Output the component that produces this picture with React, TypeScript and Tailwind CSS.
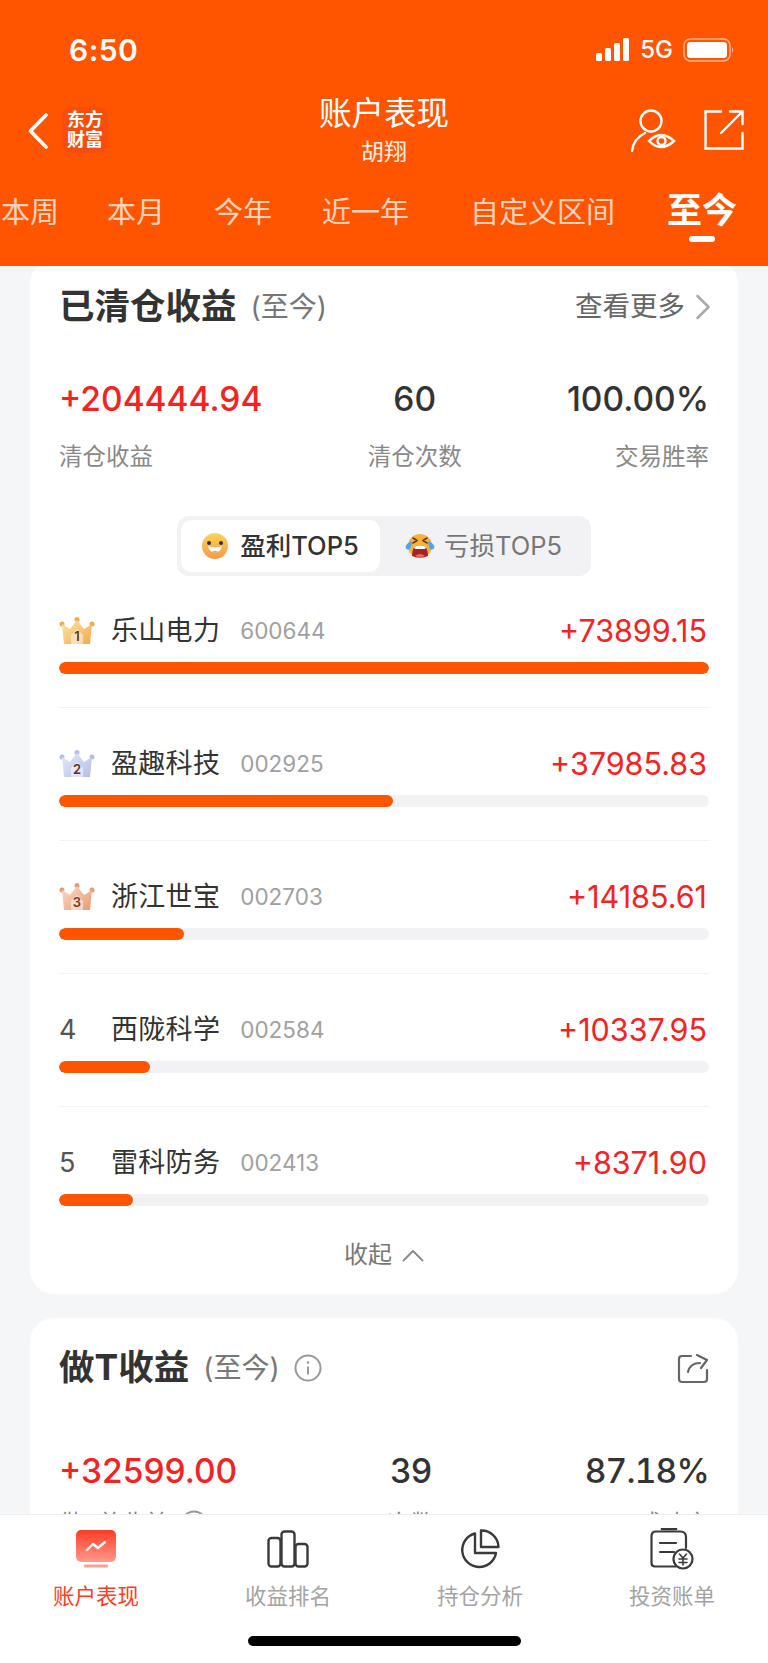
import React from 'react';
import { ChevronRight } from 'lucide-react';

const tabs = [
  { label: '本周', cls: 'ml-px' },
  { label: '本月', cls: 'ml-[48px]' },
  { label: '今年', cls: 'ml-[49px]' },
  { label: '近一年', cls: 'ml-[50px]' },
  { label: '自定义区间', cls: 'ml-[61px]' },
];

const stocks = [
  { rank: 1, name: '乐山电力', code: '600644', value: 73899.15 },
  { rank: 2, name: '盈趣科技', code: '002925', value: 37985.83 },
  { rank: 3, name: '浙江世宝', code: '002703', value: 14185.61 },
  { rank: 4, name: '西陇科学', code: '002584', value: 10337.95 },
  { rank: 5, name: '雷科防务', code: '002413', value: 8371.9 },
];

const crownColors: Record<number, { id: string; from: string; to: string; num: string }> = {
  1: { id: 'crownGold', from: '#fde6a8', to: '#f2a94a', num: '#5c3a12' },
  2: { id: 'crownSilver', from: '#e6eaf8', to: '#b4bde6', num: '#6b2a1a' },
  3: { id: 'crownBronze', from: '#fbdcc8', to: '#e99a73', num: '#7a3a22' },
};

function Crown({ rank }: { rank: number }) {
  const c = crownColors[rank];
  return (
    <svg width="36" height="28" viewBox="0 0 36 28" className="shrink-0">
      <defs>
        <linearGradient id={c.id} x1="0" y1="0" x2="1" y2="1">
          <stop offset="0" stopColor={c.from} />
          <stop offset="1" stopColor={c.to} />
        </linearGradient>
      </defs>
      <circle cx="3" cy="7" r="2.5" fill={c.to} />
      <circle cx="18" cy="2.5" r="2.5" fill={c.to} />
      <circle cx="33" cy="7" r="2.5" fill={c.to} />
      <path d="M3 7 L11 12 L18 3 L25 12 L33 7 L31 27 L5 27 Z" fill={`url(#${c.id})`} />
      <path d="M18 12 L24 18 L24 27 L12 27 L12 18 Z" fill="#ffffff" opacity="0.5" />
      <text x="18" y="24" textAnchor="middle" fontSize="13" fontWeight="600" fill={c.num} fontFamily="Inter, sans-serif">
        {rank}
      </text>
    </svg>
  );
}

function SmileFace() {
  return (
    <svg width="26" height="26" viewBox="0 0 26 26" className="shrink-0">
      <defs>
        <linearGradient id="smile" x1="0" y1="0" x2="0" y2="1">
          <stop offset="0" stopColor="#fdd455" />
          <stop offset="1" stopColor="#f39a4a" />
        </linearGradient>
      </defs>
      <circle cx="13" cy="13" r="13" fill="url(#smile)" />
      <circle cx="7" cy="10" r="2" fill="#3c2a3a" />
      <circle cx="19" cy="10" r="2" fill="#3c2a3a" />
      <path d="M6 13 Q13 15.5 20 13 Q18.5 19.5 13 19.5 Q7.5 19.5 6 13 Z" fill="#fff" />
      <path d="M10 18.6 Q13 17.4 16 18.6 Q14.5 19.5 13 19.5 Q11.5 19.5 10 18.6 Z" fill="#f4897b" />
    </svg>
  );
}

function CryFace() {
  return (
    <svg width="30" height="26" viewBox="0 0 30 26" className="shrink-0">
      <circle cx="15" cy="13" r="12" fill="#f7b23c" />
      <path d="M8 5 L12 7.5 L8 10 M22 5 L18 7.5 L22 10" fill="none" stroke="#6b3a1e" strokeWidth="1.6" strokeLinecap="round" strokeLinejoin="round" />
      <path d="M7 23 Q7 12 15 12 Q23 12 23 23 Q15 26 7 23 Z" fill="#a8202a" />
      <path d="M9 14 Q15 10.5 21 14 L20 16 L10 16 Z" fill="#fff" />
      <path d="M10 23 Q15 19 20 23 Q15 25 10 23 Z" fill="#ef6a5e" />
      <path d="M6 8 Q1 11 0.5 14 Q1 17 5 16.5 L7 10 Z" fill="#4aa8e8" />
      <path d="M24 8 Q29 11 29.5 14 Q29 17 25 16.5 L23 10 Z" fill="#4aa8e8" />
    </svg>
  );
}

function InfoIcon() {
  return (
    <svg width="28" height="28" viewBox="0 0 28 28" fill="none" stroke="#999" className="shrink-0">
      <circle cx="14" cy="14" r="12.5" strokeWidth="2" />
      <circle cx="14" cy="8.5" r="1.3" fill="#999" stroke="none" />
      <path d="M14 12.5 V20.5" strokeWidth="2" />
    </svg>
  );
}

function StockRow({ item, max, last }: { item: (typeof stocks)[number]; max: number; last: boolean }) {
  return (
    <div className={last ? 'pt-[15px]' : 'pt-[15px] pb-[33px] border-b border-[#f1f2f4] mb-[23px]'}>
      <div className="flex items-center h-[36px]">
        <div className="w-[52px] shrink-0">
          {item.rank <= 3 ? <Crown rank={item.rank} /> : <span className="text-[27px] text-[#555] leading-none">{item.rank}</span>}
        </div>
        <span className="text-[27px] text-[#333] tracking-[0.3px]">{item.name}</span>
        <span className="ml-5 text-[22.5px] text-[#a0a0a0]">{item.code}</span>
        <span className="ml-auto mr-0.5 text-[30.5px] text-[#f42323]">+{item.value.toFixed(2)}</span>
      </div>
      <div className="mt-[13px] h-3 rounded-full bg-[#f2f2f5] overflow-hidden">
        <div className="h-full rounded-full bg-[#ff5500]" style={{ width: `${(item.value / max) * 100}%` }} />
      </div>
    </div>
  );
}

type StatsProps = {
  profit: string;
  count: string;
  rate: string;
  labels: string[];
  labelGap: string;
  rateCls?: string;
  info?: boolean;
};

function Stats({ profit, count, rate, labels, labelGap, rateCls, info }: StatsProps) {
  return (
    <div className="flex justify-between">
      <div>
        <div className="text-[33.5px] leading-[44px] font-medium text-[#f42323]">{profit}</div>
        <div className={`${labelGap} flex items-center gap-3 text-[23.5px] leading-[32px] text-[#888]`}>
          {labels[0]}
          {info && <InfoIcon />}
        </div>
      </div>
      <div className="text-center">
        <div className="text-[33.5px] leading-[44px] font-medium text-[#333]">{count}</div>
        <div className={`${labelGap} text-[23.5px] leading-[32px] text-[#888]`}>{labels[1]}</div>
      </div>
      <div className="text-right">
        <div className={`text-[33.5px] leading-[44px] font-medium text-[#333] ${rateCls ?? ''}`}>{rate}</div>
        <div className={`${labelGap} text-[23.5px] leading-[32px] text-[#888]`}>{labels[2]}</div>
      </div>
    </div>
  );
}

function NavItem({ label, active, children }: { label: string; active?: boolean; children: React.ReactNode }) {
  return (
    <div className="flex flex-col items-center">
      <div className="h-[44px] flex items-center justify-center">{children}</div>
      <span className={`mt-[11px] text-[21.5px] leading-[28px] ${active ? 'text-[#ff3b24]' : 'text-[#a3a3a3]'}`}>{label}</span>
    </div>
  );
}

export default function App() {
  const max = Math.max(...stocks.map((s) => s.value));

  return (
    <div className="h-[1663px] w-[768px] overflow-hidden flex flex-col bg-[#f5f6f8] font-['Inter','Noto_Sans_CJK_SC',sans-serif]">
      {/* header */}
      <header className="h-[266px] shrink-0 bg-[#ff5500] text-white flex flex-col relative z-10">
        <div className="h-[100px] shrink-0 flex items-center justify-between pl-[69px] pr-[33px]">
          <span className="text-[30px] font-semibold tracking-[0.5px]">6:50</span>
          <div className="flex items-center">
            <svg width="34" height="24" viewBox="0 0 34 24" fill="#fff">
              <rect x="0" y="15" width="6" height="8" rx="1.5" />
              <rect x="9" y="10" width="6" height="13" rx="1.5" />
              <rect x="18" y="5" width="6" height="18" rx="1.5" />
              <rect x="27" y="0" width="6" height="23" rx="1.5" />
            </svg>
            <span className="ml-[10px] text-[24px] font-medium">5G</span>
            <svg width="52" height="24" viewBox="0 0 52 24" className="ml-[10px]">
              <rect x="1" y="1" width="46" height="22" rx="6.5" fill="none" stroke="#ffffff" strokeOpacity="0.55" strokeWidth="1.5" />
              <rect x="4" y="4" width="40" height="16" rx="3.5" fill="#fff" />
              <path d="M49 9 Q51.5 12 49 15 Z" fill="#ffffff" fillOpacity="0.55" />
            </svg>
          </div>
        </div>
        <div className="h-[72px] shrink-0 flex items-start relative">
          <div className="flex-1 flex items-start pl-[28px] pt-[7px]">
            <svg width="20" height="36" viewBox="0 0 20 36" fill="none" stroke="#fff" strokeWidth="3.6" strokeLinecap="round" strokeLinejoin="round" className="mt-[6px]">
              <path d="M18 2 L2.5 18 L18 34" />
            </svg>
            <div className="ml-[14px] w-[46px] h-[46px] rounded-[9px] bg-[#f74e10] flex items-center justify-center text-[18px] leading-[20px] font-bold text-center">
              东方<br />财富
            </div>
          </div>
          <div className="flex flex-col items-center mr-1">
            <span className="text-[32.5px] leading-[33px] mt-[-3px]">账户表现</span>
            <span className="text-[23px] leading-[28px] mt-[8px] text-white/90">胡翔</span>
          </div>
          <div className="flex-1 flex justify-end items-start gap-7 pr-6 pt-[9px]">
            <svg width="46" height="44" viewBox="0 0 46 44" fill="none" stroke="#fff" strokeWidth="2.4" strokeLinecap="round">
              <circle cx="21" cy="12" r="10.5" />
              <path d="M2 42 C3 33 9 27 15 24" />
              <path d="M19 32 Q31 20 44 32 Q31 44 19 32 Z" />
              <circle cx="31.5" cy="32" r="4" />
            </svg>
            <svg width="40" height="40" viewBox="0 0 40 40" fill="none" stroke="#fff" strokeWidth="2.4" strokeLinecap="round" className="mt-px">
              <path d="M17 1.5 H1.5 V38.5 H38.5 V23" />
              <path d="M17 23 L38 2 M26 1.5 H38.5 V14" />
            </svg>
          </div>
        </div>
        <div className="flex items-start text-[29px] leading-[34px] text-white/75 pt-[24px]">
          {tabs.map((t) => (
            <span key={t.label} className={`${t.cls} whitespace-nowrap`}>{t.label}</span>
          ))}
          <div className="ml-[52px] flex flex-col items-center mt-[-6px]">
            <span className="text-[35px] leading-[40px] font-bold text-white">至今</span>
            <span className="mt-[6px] w-[26px] h-[6px] rounded-full bg-white" />
          </div>
        </div>
      </header>

      {/* content */}
      <main className="flex-1 min-h-0 overflow-hidden px-[30px] -mt-[6px]">
        <section className="bg-white rounded-[24px] px-[29px] pt-[25px] pb-[21px]">
          <div className="flex items-center justify-between h-[44px]">
            <div className="flex items-center">
              <h2 className="text-[35.5px] font-bold text-[#333]">已清仓收益</h2>
              <span className="ml-[14px] text-[28px] text-[#777]">(至今)</span>
            </div>
            <div className="flex items-center text-[27.5px] text-[#666]">
              查看更多
              <ChevronRight size={44} strokeWidth={1.4} className="text-[#aaa] -ml-[4px] -my-2 -mr-[16px]" />
            </div>
          </div>
          <div className="mt-[48px]">
            <Stats profit="+204444.94" count="60" rate="100.00%" labels={['清仓收益', '清仓次数', '交易胜率']} labelGap="mt-5" />
          </div>
          <div className="mt-[43px] flex justify-center">
            <div className="flex w-[414px] h-[60px] p-1 rounded-[12px] bg-[#f2f2f5] text-[25.5px]">
              <div className="w-[199px] bg-white rounded-[11px] flex items-center justify-center gap-3 font-medium text-[#333]">
                <SmileFace />
                盈利TOP5
              </div>
              <div className="flex-1 flex items-center justify-center gap-[9px] text-[#777]">
                <CryFace />
                亏损TOP5
              </div>
            </div>
          </div>
          <div className="mt-[22px]">
            {stocks.map((s, i) => (
              <StockRow key={s.code} item={s} max={max} last={i === stocks.length - 1} />
            ))}
          </div>
          <div className="mt-[31px] flex items-center justify-center text-[24px] leading-[36px] text-[#777]">
            收起
            <svg width="22" height="13" viewBox="0 0 22 13" fill="none" stroke="#888" strokeWidth="1.8" strokeLinecap="round" strokeLinejoin="round" className="ml-[10px]">
              <path d="M1.5 11.5 L11 2 L20.5 11.5" />
            </svg>
          </div>
        </section>

        <section className="mt-6 bg-white rounded-[24px] px-[29px] pt-[28px]">
          <div className="flex items-center justify-between h-[44px]">
            <div className="flex items-center">
              <h2 className="text-[35.5px] font-bold text-[#333]">做T收益</h2>
              <span className="ml-[14px] text-[28px] text-[#777]">(至今)</span>
              <span className="ml-[14px]"><InfoIcon /></span>
            </div>
            <svg width="32" height="32" viewBox="0 0 32 32" fill="none" stroke="#666" strokeWidth="2.2" strokeLinecap="round" strokeLinejoin="round">
              <path d="M14 4 H5 Q2 4 2 7 V27 Q2 30 5 30 H27 Q30 30 30 27 V18" />
              <path d="M11 20 Q13 11 23 11 M20 3 L30 8 L24 16" />
            </svg>
          </div>
          <div className="mt-[59px]">
            <Stats profit="+32599.00" count="39" rate="87.18%" labels={['做T总收益', '次数', '成功率']} labelGap="mt-[15px]" rateCls="tabular-nums tracking-[-0.8px]" info />
          </div>
        </section>
      </main>

      {/* bottom nav */}
      <footer className="h-[149px] shrink-0 bg-white border-t border-[#eeeeee] relative z-10 pt-[12px]">
        <div className="grid grid-cols-4">
          <NavItem label="账户表现" active>
            <svg width="40" height="38" viewBox="0 0 40 38">
              <defs>
                <linearGradient id="navRed" x1="0" y1="0" x2="0" y2="1">
                  <stop offset="0" stopColor="#ff3b24" />
                  <stop offset="1" stopColor="#ff9b8c" />
                </linearGradient>
              </defs>
              <rect x="0" y="0" width="40" height="32" rx="5" fill="url(#navRed)" />
              <rect x="8" y="34.5" width="24" height="3" rx="1" fill="#ff9f92" />
              <path d="M11 20 L17 14 L22 18 L29 12" fill="none" stroke="#fff" strokeWidth="2.4" strokeLinecap="round" strokeLinejoin="round" />
            </svg>
          </NavItem>
          <NavItem label="收益排名">
            <svg width="42" height="38" viewBox="0 0 42 38" fill="none" stroke="#3a3a3a" strokeWidth="2.4" strokeLinejoin="round">
              <rect x="1.5" y="8" width="12" height="28.5" rx="3" />
              <rect x="14.5" y="1.5" width="13" height="35" rx="3" />
              <rect x="28.5" y="14" width="12" height="22.5" rx="3" />
            </svg>
          </NavItem>
          <NavItem label="持仓分析">
            <svg width="40" height="40" viewBox="0 0 40 40" fill="none" stroke="#3a3a3a" strokeWidth="2.4" strokeLinejoin="round">
              <path d="M15 4.5 A17 17 0 1 0 36 24 H15 Z" />
              <path d="M21 1.5 A17 17 0 0 1 38.5 18 H21 Z" />
            </svg>
          </NavItem>
          <NavItem label="投资账单">
            <svg width="44" height="42" viewBox="0 0 44 42" fill="none" stroke="#3a3a3a" strokeWidth="2.2" strokeLinecap="round">
              <path d="M26 38.5 H5 Q1.5 38.5 1.5 35 V8 Q1.5 3.5 6 3.5 H30 Q36 3.5 36 9 V20" />
              <path d="M12 1 H26" strokeWidth="2.6" />
              <path d="M10 15 H26 M10 24 H24" />
              <circle cx="33" cy="31" r="9.5" fill="#fff" />
              <path d="M29.5 26 L33 30 L36.5 26 M29 31 H37 M29 34.5 H37 M33 30 V37" strokeWidth="1.6" />
            </svg>
          </NavItem>
        </div>
        <div className="absolute left-[248px] top-[121px] w-[273px] h-[10px] rounded-full bg-black" />
      </footer>
    </div>
  );
}
